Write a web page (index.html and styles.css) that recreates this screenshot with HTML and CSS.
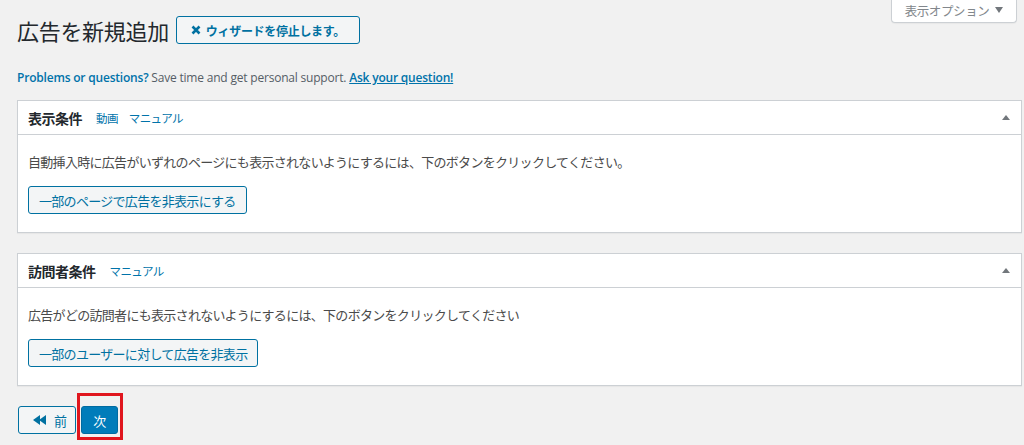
FILE: index.html
```html
<!DOCTYPE html>
<html lang="ja">
<head>
<meta charset="utf-8">
<title>広告を新規追加</title>
<link rel="stylesheet" href="styles.css">
</head>
<body>
<div class="screen-meta">
  <button class="screen-options">表示オプション <svg class="caret-down" width="8" height="6" viewBox="0 0 8 6"><polygon points="0,0 8,0 4,6"/></svg></button>
</div>
<div class="wrap">
  <div class="title-row">
    <h1 class="page-title">広告を新規追加</h1>
    <button class="btn btn-wizard"><svg class="x-icon" width="10" height="10" viewBox="0 0 10 10"><path d="M1.5 1.5 L8.5 8.5 M8.5 1.5 L1.5 8.5"/></svg>ウィザードを停止します。</button>
  </div>

  <p class="notice"><a class="link-strong" href="#">Problems or questions?</a> Save time and get personal support. <a class="link-strong link-u" href="#">Ask your question!</a></p>

  <section class="panel">
    <header class="panel-head">
      <h2 class="panel-title">表示条件</h2>
      <a class="panel-link" href="#">動画</a>
      <a class="panel-link" href="#">マニュアル</a>
      <svg class="toggle" width="8" height="5" viewBox="0 0 8 5"><polygon points="4,0 8,5 0,5"/></svg>
    </header>
    <div class="panel-body">
      <p class="panel-text">自動挿入時に広告がいずれのページにも表示されないようにするには、下のボタンをクリックしてください。</p>
      <button class="btn btn-secondary">一部のページで広告を非表示にする</button>
    </div>
  </section>

  <section class="panel">
    <header class="panel-head">
      <h2 class="panel-title">訪問者条件</h2>
      <a class="panel-link" href="#">マニュアル</a>
      <svg class="toggle" width="8" height="5" viewBox="0 0 8 5"><polygon points="4,0 8,5 0,5"/></svg>
    </header>
    <div class="panel-body">
      <p class="panel-text">広告がどの訪問者にも表示されないようにするには、下のボタンをクリックしてください</p>
      <button class="btn btn-secondary">一部のユーザーに対して広告を非表示</button>
    </div>
  </section>

  <div class="nav-row">
    <button class="btn btn-secondary btn-prev"><svg class="back-icon" width="14" height="10" viewBox="0 0 14 10"><polygon points="0,5 7,0 7,10"/><polygon points="6,5 13,0 13,10"/></svg>前</button>
    <span class="highlight"><button class="btn btn-primary">次</button></span>
  </div>
</div>
</body>
</html>
```

FILE: styles.css
```css
*, *::before, *::after { box-sizing: border-box; }

html, body {
  margin: 0;
  padding: 0;
  background: #f1f1f1;
}

body {
  font-family: "Open Sans", "Noto Sans CJK JP", sans-serif;
  font-size: 13px;
  color: #444;
  height: 445px;
  overflow: hidden;
}

.screen-meta {
  float: right;
  margin-right: 7px;
}

.screen-options {
  width: 126px;
  height: 23px;
  padding: 0 0 2px 0;
  background: #fff;
  border: 1px solid #ccd0d4;
  border-top: none;
  border-radius: 0 0 4px 4px;
  box-shadow: 0 1px 1px rgba(0,0,0,.04);
  font-family: "Noto Sans CJK JP", sans-serif;
  font-size: 12.5px;
  letter-spacing: -0.4px;
  color: #82878c;
  display: flex;
  align-items: center;
  justify-content: center;
  gap: 6px;
}

.caret-down { fill: #72777c; }

.wrap {
  padding: 16px 2px 0 17px;
}

.title-row {
  display: flex;
  align-items: center;
  gap: 7px;
  height: 28px;
}

.page-title {
  margin: 0;
  font-family: "Noto Sans CJK JP", sans-serif;
  font-weight: 400;
  font-size: 22px;
  letter-spacing: -0.3px;
  line-height: 28px;
  color: #23282d;
}

.btn {
  font-family: "Noto Sans CJK JP", sans-serif;
  height: 28px;
  padding: 0 10px;
  border-radius: 3px;
  font-size: 13px;
  letter-spacing: -0.7px;
  display: inline-flex;
  align-items: center;
  cursor: pointer;
}

.btn-wizard {
  width: 184px;
  justify-content: center;
  gap: 5px;
  background: #f3f5f6;
  border: 1px solid #0071a1;
  color: #0071a1;
  font-weight: 700;
  font-size: 12px;
  letter-spacing: -0.3px;
}

.x-icon path {
  stroke: #0071a1;
  stroke-width: 2.6;
  fill: none;
}

.notice {
  margin: 24px 0 12px;
  line-height: 20px;
  font-size: 12px;
  letter-spacing: -0.2px;
  color: #555d66;
}

.link-strong {
  color: #0073aa;
  font-weight: 600;
  text-decoration: none;
}

.link-u { text-decoration: underline; }

.panel {
  background: #fff;
  border: 1px solid #ccd0d4;
  box-shadow: 0 1px 1px rgba(0,0,0,.04);
  margin-bottom: 20px;
}

.panel-head {
  display: flex;
  align-items: center;
  height: 34px;
  padding: 0 11px 0 10px;
  border-bottom: 1px solid #ccd0d4;
  font-family: "Noto Sans CJK JP", sans-serif;
}

.panel-title {
  margin: 0 14px 0 0;
  font-size: 14px;
  font-weight: 700;
  letter-spacing: -0.5px;
  color: #23282d;
}

.panel-link {
  color: #0073aa;
  text-decoration: none;
  font-size: 11.5px;
  letter-spacing: -0.6px;
  margin-right: 11px;
}

.toggle {
  margin-left: auto;
  fill: #72777c;
}

.panel-body {
  padding: 17px 10px 18px;
  font-family: "Noto Sans CJK JP", sans-serif;
}

.panel-text {
  margin: 0 0 14px;
  line-height: 20px;
  font-size: 13px;
  letter-spacing: -0.7px;
  color: #4a4a4a;
}

.btn-secondary {
  background: #f3f5f6;
  border: 1px solid #0071a1;
  color: #0071a1;
}

.nav-row {
  display: flex;
  gap: 5px;
  margin-left: 1px;
}

.btn-prev {
  width: 58px;
  padding: 0 0 0 14px;
  gap: 7px;
}

.back-icon { fill: #0071a1; }

.highlight {
  position: relative;
  display: inline-flex;
}

.highlight::after {
  content: "";
  position: absolute;
  left: -4px;
  top: -13px;
  width: 46px;
  height: 47px;
  border: 3px solid #e0161e;
  pointer-events: none;
}

.btn-primary {
  width: 37px;
  justify-content: center;
  padding: 0;
  background: #007cba;
  border: 1px solid #006ba1;
  color: #fff;
}
```
